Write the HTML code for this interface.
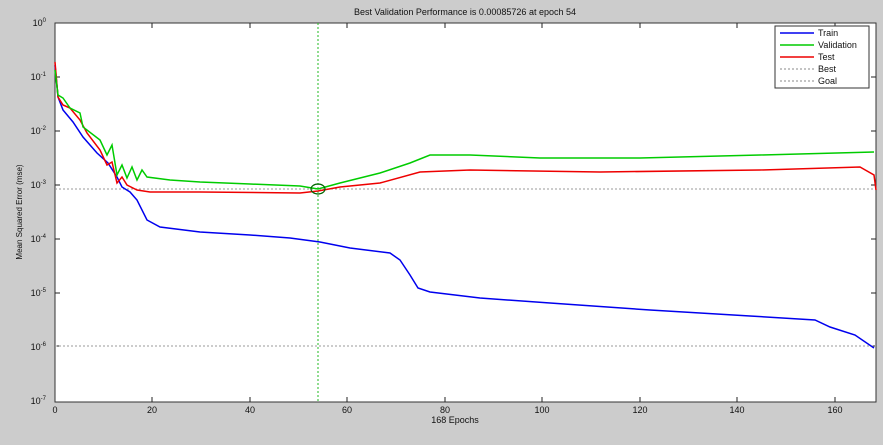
<!DOCTYPE html>
<html><head><style>
body{margin:0;background:#cccccc;width:883px;height:440px;overflow:hidden;font-family:"Liberation Sans",sans-serif}
</style></head><body>
<svg width="883" height="440" xmlns="http://www.w3.org/2000/svg" font-family="Liberation Sans, sans-serif">
<rect x="0" y="0" width="883" height="440" fill="#cccccc"/>
<rect x="55" y="23" width="821" height="379" fill="#fff" stroke="#333" stroke-width="1"/>
<text x="465" y="15" font-size="9" text-anchor="middle" fill="#111">Best Validation Performance is 0.00085726 at epoch 54</text>
<g font-size="9" fill="#111" text-anchor="end">
<text x="46" y="26">10<tspan font-size="6" dy="-4">0</tspan></text>
<text x="46" y="80">10<tspan font-size="6" dy="-4">-1</tspan></text>
<text x="46" y="134">10<tspan font-size="6" dy="-4">-2</tspan></text>
<text x="46" y="188">10<tspan font-size="6" dy="-4">-3</tspan></text>
<text x="46" y="242">10<tspan font-size="6" dy="-4">-4</tspan></text>
<text x="46" y="296">10<tspan font-size="6" dy="-4">-5</tspan></text>
<text x="46" y="350">10<tspan font-size="6" dy="-4">-6</tspan></text>
<text x="46" y="404">10<tspan font-size="6" dy="-4">-7</tspan></text>
</g>
<g font-size="9" fill="#111" text-anchor="middle">
<text x="55" y="413">0</text><text x="152" y="413">20</text><text x="250" y="413">40</text><text x="347" y="413">60</text><text x="445" y="413">80</text><text x="542" y="413">100</text><text x="640" y="413">120</text><text x="737" y="413">140</text><text x="835" y="413">160</text>
<text x="455" y="423">168 Epochs</text>
</g>
<text transform="translate(22,212) rotate(-90)" font-size="8" text-anchor="middle" fill="#111">Mean Squared Error  (mse)</text>
<g stroke="#222" stroke-width="1">
<path d="M152 402v-5M250 402v-5M347 402v-5M445 402v-5M542 402v-5M640 402v-5M737 402v-5M835 402v-5M152 23v5M250 23v5M347 23v5M445 23v5M542 23v5M640 23v5M737 23v5M835 23v5"/>
<path d="M55 77h5M55 131h5M55 185h5M55 239h5M55 293h5M55 346h5M876 77h-5M876 131h-5M876 185h-5M876 239h-5M876 293h-5M876 346h-5"/>
</g>
<g stroke="#999" stroke-width="1" stroke-dasharray="2,2" fill="none">
<path d="M55 189H876M55 346H876"/>
</g>
<path d="M318 23V402" stroke="#22bb22" stroke-width="1" stroke-dasharray="2,2"/>
<polyline fill="none" stroke="#0000ee" stroke-width="1.5" points="55,65 58,97 63,110 73,122 83,137 97,153 108,163 117,177 122,187 130,192 137,200 147,220 160,227 200,232 250,235 290,238 320,242 350,248 390,253 400,260 410,275 418,288 430,292 480,298 550,303 650,310 750,316 815,320 830,327 855,335 874,348"/>
<polyline fill="none" stroke="#ee0000" stroke-width="1.5" points="55,62 58,97 63,105 70,108 80,120 87,133 100,150 107,165 112,162 117,183 122,177 127,185 137,190 150,192 200,192 300,193 318,191 340,187 380,183 420,172 470,170 600,172 760,170 860,167 874,175 876,190"/>
<polyline fill="none" stroke="#00cc00" stroke-width="1.5" points="55,70 58,95 63,98 70,108 80,113 83,127 100,140 107,155 112,145 117,175 122,165 127,178 132,167 137,180 142,170 147,177 170,180 200,182 250,184 300,186 318,189 340,183 380,173 410,163 430,155 470,155 540,158 640,158 760,155 874,152"/>
<ellipse cx="318" cy="189" rx="7" ry="5" fill="none" stroke="#006600" stroke-width="1.2"/>
<rect x="775" y="26" width="94" height="62" fill="#fff" stroke="#333"/>
<g stroke-width="1.5"><path d="M780 33h34" stroke="#0000ee"/><path d="M780 45h34" stroke="#00cc00"/><path d="M780 57h34" stroke="#ee0000"/></g>
<g stroke="#888" stroke-dasharray="2,2"><path d="M780 69h34M780 81h34"/></g>
<g font-size="9" fill="#111"><text x="818" y="36">Train</text><text x="818" y="48">Validation</text><text x="818" y="60">Test</text><text x="818" y="72">Best</text><text x="818" y="84">Goal</text></g>
</svg>
</body></html>
